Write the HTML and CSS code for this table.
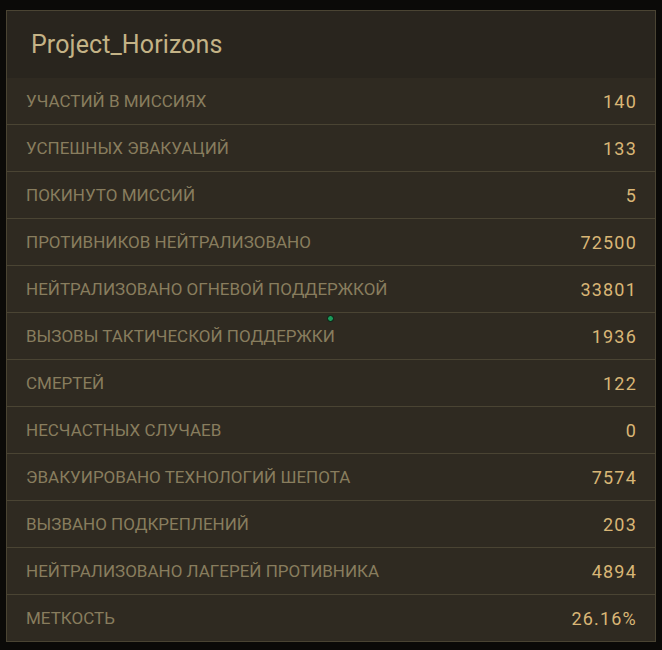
FILE: index.html
```html
<!DOCTYPE html>
<html lang="ru">
<head>
    <meta charset="UTF-8">
    <meta name="viewport" content="width=device-width, initial-scale=1.0">
    <title>Project_Horizons</title>
    <link rel="stylesheet" href="styles.css">
</head>
<body>
    <div class="panel">
        <h1 class="panel-title">Project_Horizons</h1>

        <!-- статистика -->
        <div class="stats">
            <div class="stat-row"><span class="stat-label">Участий в миссиях</span><span class="stat-value">140</span></div>
            <div class="stat-row"><span class="stat-label">Успешных эвакуаций</span><span class="stat-value">133</span></div>
            <div class="stat-row"><span class="stat-label">Покинуто миссий</span><span class="stat-value">5</span></div>
            <div class="stat-row"><span class="stat-label">Противников нейтрализовано</span><span class="stat-value">72500</span></div>
            <div class="stat-row"><span class="stat-label">Нейтрализовано огневой поддержкой</span><span class="stat-value">33801</span></div>
            <div class="stat-row"><span class="stat-label">Вызовы тактической поддержки</span><span class="stat-value">1936</span></div>
            <div class="stat-row"><span class="stat-label">Смертей</span><span class="stat-value">122</span></div>
            <div class="stat-row"><span class="stat-label">Несчастных случаев</span><span class="stat-value">0</span></div>
            <div class="stat-row"><span class="stat-label">Эвакуировано технологий шепота</span><span class="stat-value">7574</span></div>
            <div class="stat-row"><span class="stat-label">Вызвано подкреплений</span><span class="stat-value">203</span></div>
            <div class="stat-row"><span class="stat-label">Нейтрализовано лагерей противника</span><span class="stat-value">4894</span></div>
            <div class="stat-row"><span class="stat-label">Меткость</span><span class="stat-value">26.16%</span></div>
        </div>

        <!-- маркер курсора -->
        <span class="cursor-dot"></span>
    </div>
</body>
</html>
```

FILE: styles.css
```css
* {
    box-sizing: border-box;
    margin: 0;
    padding: 0;
}

body {
    font-family: Roboto, "Liberation Sans", sans-serif;
    background-color: #0b0a08;
    padding: 10px 6px;
}

.panel {
    position: relative;
    width: 650px;
    border: 1px solid #4a4433;
    background-color: #2f2a21;
}

.panel-title {
    height: 67px;
    padding-left: 24px;
    display: flex;
    align-items: center;
    background-color: #29251e;
    color: #c4b386;
    font-size: 25px;
    font-weight: 400;
    letter-spacing: 0.1px;
}

.stat-row {
    height: 47px;
    padding: 0 18px 0 19px;
    display: flex;
    align-items: center;
    justify-content: space-between;
    border-top: 1px solid #4a4433;
    font-size: 17px;
}

.stat-row:first-child {
    border-top: none;
    height: 46px;
}

.stat-label {
    color: #887d5e;
    text-transform: uppercase;
    letter-spacing: 0;
}

.stat-value {
    color: #d9b676;
    font-size: 18px;
    letter-spacing: 1.2px;
}

.cursor-dot {
    position: absolute;
    left: 320px;
    top: 304px;
    width: 7px;
    height: 7px;
    border-radius: 50%;
    background-color: #1c9a5a;
    border: 1px solid #0c1a10;
}
```
